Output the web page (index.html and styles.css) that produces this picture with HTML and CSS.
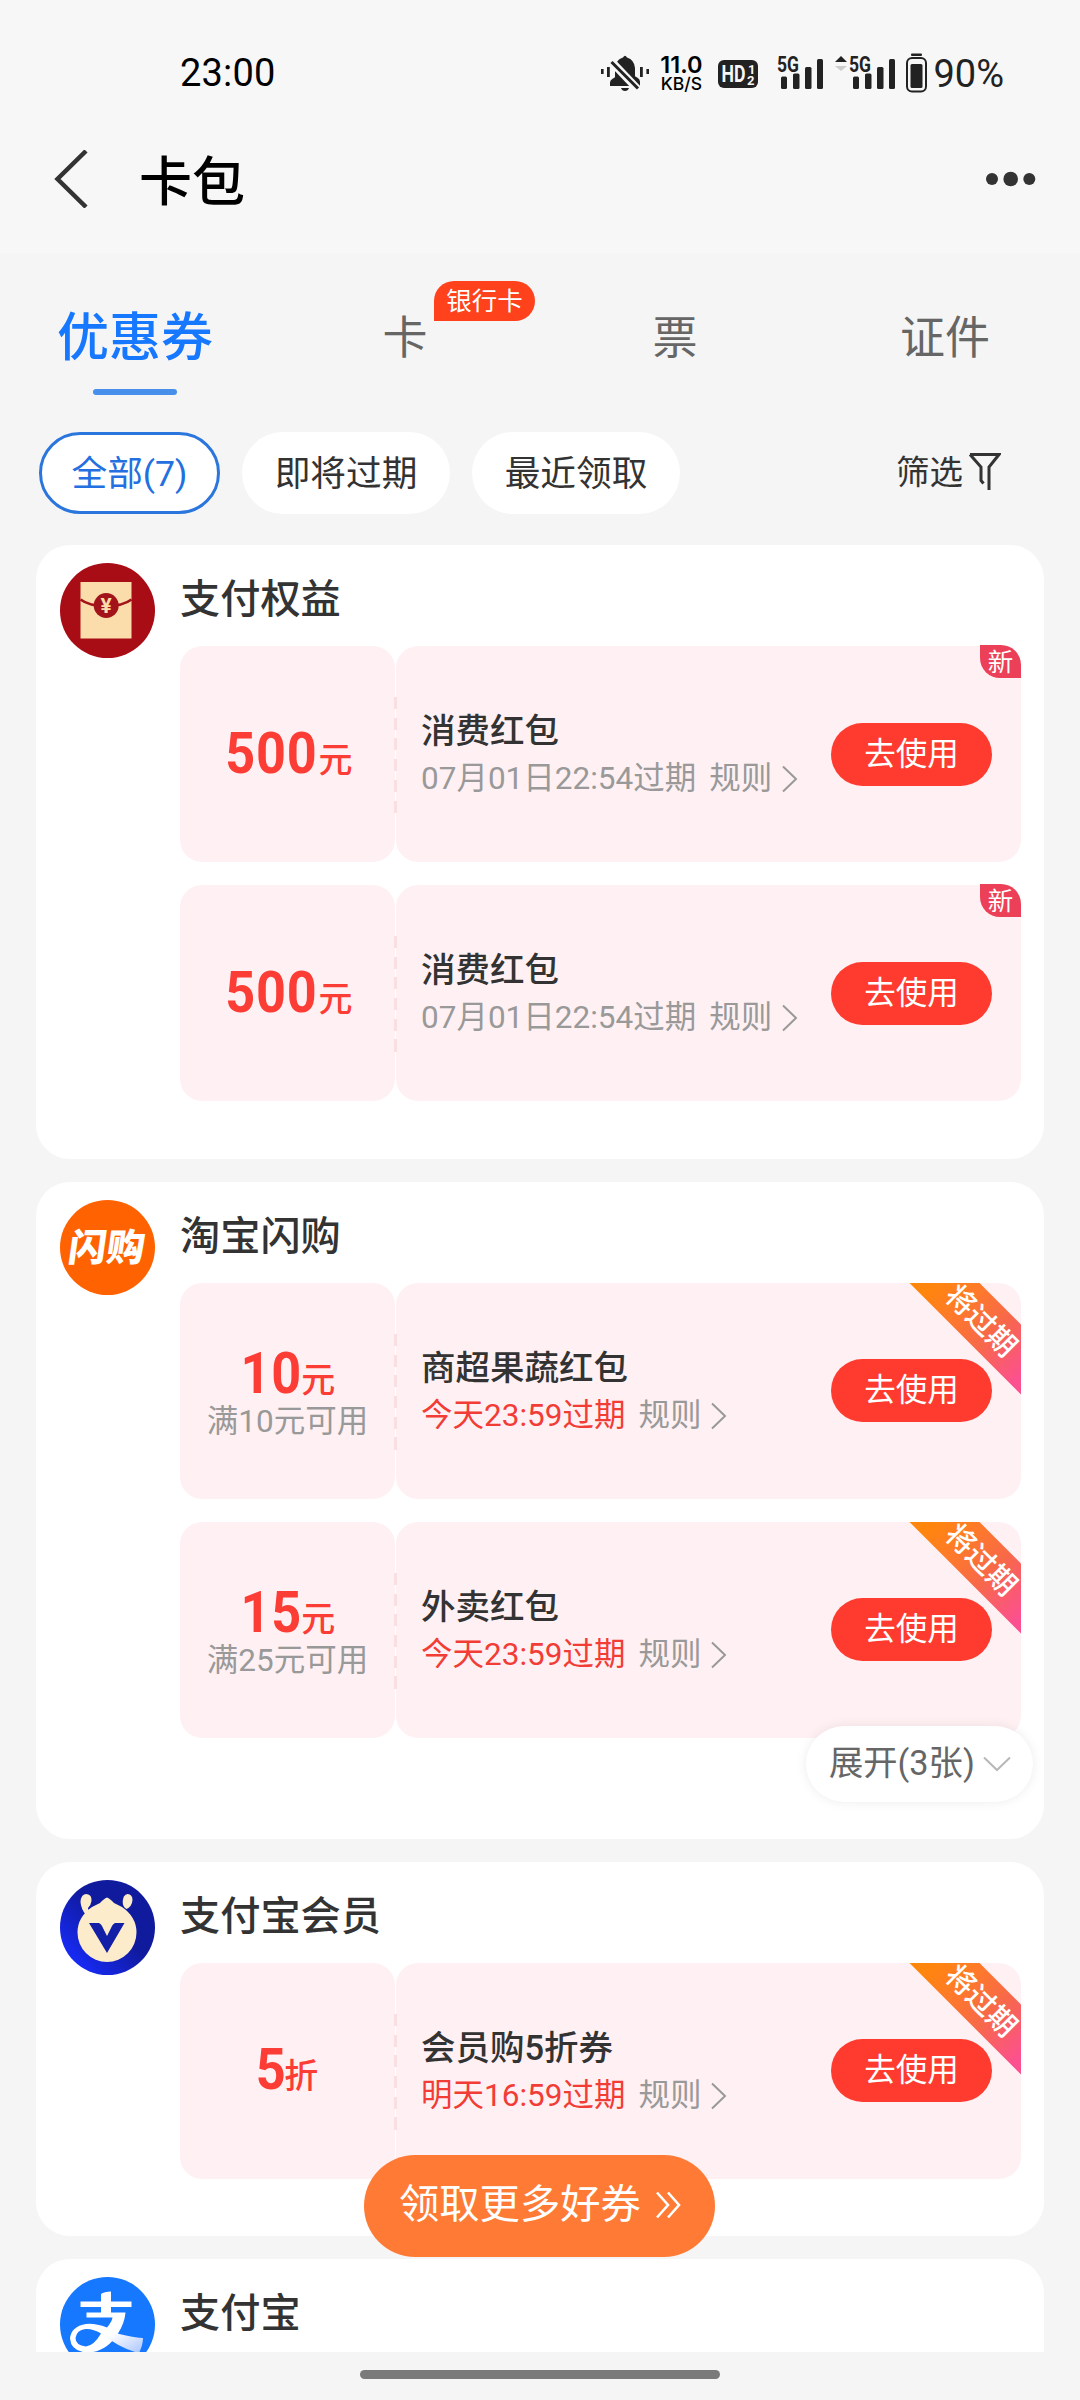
FILE: index.html
```html
<!DOCTYPE html>
<html lang="zh-CN">
<head>
<meta charset="utf-8">
<title>卡包</title>
<link rel="stylesheet" href="styles.css">
</head>
<body>
<svg class="sprite" width="0" height="0">
  <symbol id="arrow" viewBox="0 0 17 28"><path d="M2 1.500 15 14 2 26.500" fill="none" stroke="currentColor" stroke-width="2"/></symbol>
</svg>

<div class="top">
  <div class="status">
    <span class="clock">23:00</span>
    <div class="indicators">
      <svg class="bell" viewBox="0 0 48 36" fill="#222">
        <rect x="0" y="14" width="2.6" height="5"/><rect x="6" y="12" width="2.8" height="10"/>
        <rect x="39" y="12" width="2.8" height="10"/><rect x="45.4" y="14" width="2.6" height="5"/>
        <path d="M9 31v-3.500q0-2.500 3-4l2-1.200V13q.5-8 8-10.500Q24-1 26 2.500q7.500 2.500 8 10.500v8.300l2.500 1.500q2.500 1.500 2.500 4V31Z"/>
        <path d="M20 33h8q-1 3-4 3t-4-3Z"/>
        <path d="M8 4 37 34.500" stroke="#f7f7f7" stroke-width="8"/>
        <path d="M10.500 7 37 33.500" stroke="#222" stroke-width="3"/>
      </svg>
      <div class="speed"><b>11.0</b><span>KB/S</span></div>
      <svg class="hd" viewBox="0 0 40 28">
        <rect width="40" height="28" rx="6" fill="#222"/>
        <g fill="#f7f7f7"><text x="3.500" y="22" font-size="23" textLength="24" lengthAdjust="spacingAndGlyphs">HD</text><text x="30" y="13.500" font-size="13">1</text><text x="29" y="25" font-size="13">2</text></g>
      </svg>
      <svg class="signal" viewBox="0 0 46 34" fill="#222">
        <text x="0" y="16.500" textLength="22" lengthAdjust="spacingAndGlyphs">5G</text>
        <rect x="4" y="21.500" width="6" height="12.500" rx="1.500"/><rect x="16" y="18.500" width="6.500" height="15.500" rx="1.500"/><rect x="28" y="12" width="6.500" height="22" rx="1.500"/><rect x="40" y="4" width="6" height="30" rx="1.500"/>
      </svg>
      <svg class="updown" viewBox="0 0 12 34"><path d="M6 1 12 7H0Z" fill="#222"/><path d="M0 11h12l-6 5Z" fill="#ccc"/></svg>
      <svg class="signal second" viewBox="0 0 46 34" fill="#222">
        <text x="0" y="16.500" textLength="22" lengthAdjust="spacingAndGlyphs">5G</text>
        <rect x="4" y="21.500" width="6" height="12.500" rx="1.500"/><rect x="16" y="18.500" width="6.500" height="15.500" rx="1.500"/><rect x="28" y="12" width="6.500" height="22" rx="1.500"/><rect x="40" y="4" width="6" height="30" rx="1.500"/>
      </svg>
      <svg class="battery" viewBox="0 0 21 40"><rect x="5" y="0.500" width="11" height="2.500" rx="1" fill="#222"/><rect x="1" y="5" width="19" height="33.500" rx="5" fill="none" stroke="#222" stroke-width="2"/><rect x="4.500" y="11" width="12" height="24" rx="1.500" fill="#222"/></svg>
      <span class="percent">90%</span>
    </div>
  </div>
  <div class="nav">
    <svg class="back" viewBox="0 0 35 58"><path d="M32 1 3.500 29 32 57" fill="none" stroke="#333" stroke-width="4.500"/></svg>
    <h1>卡包</h1>
    <svg class="more" viewBox="0 0 50 16" fill="#333"><circle cx="6" cy="8" r="6"/><circle cx="24.700" cy="8" r="7.300"/><circle cx="43.300" cy="8" r="6"/></svg>
  </div>
</div>

<div class="tabs">
  <div class="tab active">优惠券</div>
  <div class="tab">卡<span class="tip">银行卡</span></div>
  <div class="tab">票</div>
  <div class="tab">证件</div>
</div>

<div class="filters">
  <span class="chip on">全部(7)</span>
  <span class="chip">即将过期</span>
  <span class="chip">最近领取</span>
  <span class="filter"><span>筛选</span><svg viewBox="0 0 32 38"><path d="M1.500 1.500h29L20.500 14v23M1.500 1.500 12.500 14v13.500l2.500 3" fill="none" stroke="#333" stroke-width="3"/></svg></span>
</div>

<div class="list">
  <section class="card">
    <svg class="logo" viewBox="0 0 95 95">
      <circle cx="47.500" cy="47.500" r="47.500" fill="#a80c14"/>
      <rect x="20.500" y="19" width="51" height="56.500" fill="#fbdcab"/>
      <path d="M20.500 36.500Q29 43 46 43T71.500 36.500" fill="none" stroke="#a3131a" stroke-width="2.600"/>
      <circle cx="46.200" cy="42.500" r="12.500" fill="#a3131a"/>
      <text x="46.200" y="50" class="yen">¥</text>
    </svg>
    <div class="body">
      <h2>支付权益</h2>
      <div class="coupons">
        <article class="coupon">
          <div class="value"><p><b>500</b>元</p></div>
          <div class="info"><div class="desc"><h3>消费红包</h3><p><span>07月01日22:54过期</span><span class="rule">规则<svg><use href="#arrow"/></svg></span></p></div><a class="use">去使用</a><span class="new">新</span></div>
        </article>
        <article class="coupon">
          <div class="value"><p><b>500</b>元</p></div>
          <div class="info"><div class="desc"><h3>消费红包</h3><p><span>07月01日22:54过期</span><span class="rule">规则<svg><use href="#arrow"/></svg></span></p></div><a class="use">去使用</a><span class="new">新</span></div>
        </article>
      </div>
    </div>
  </section>

  <section class="card tall">
    <div class="logo flash"><span>闪购</span></div>
    <div class="body">
      <h2>淘宝闪购</h2>
      <div class="coupons">
        <article class="coupon">
          <div class="value"><p><b>10</b>元</p><small>满10元可用</small></div>
          <div class="info"><div class="desc"><h3>商超果蔬红包</h3><p><span class="soon">今天23:59过期</span><span class="rule">规则<svg><use href="#arrow"/></svg></span></p></div><a class="use">去使用</a><span class="ribbon"><i>将过期</i></span></div>
        </article>
        <article class="coupon">
          <div class="value"><p><b>15</b>元</p><small>满25元可用</small></div>
          <div class="info"><div class="desc"><h3>外卖红包</h3><p><span class="soon">今天23:59过期</span><span class="rule">规则<svg><use href="#arrow"/></svg></span></p></div><a class="use">去使用</a><span class="ribbon"><i>将过期</i></span></div>
        </article>
      </div>
    </div>
    <div class="expand"><span>展开(3张)</span><svg viewBox="0 0 28 16"><path d="M1 1.500 14 14 27 1.500" fill="none" stroke="#b8b8b8" stroke-width="2"/></svg></div>
  </section>

  <section class="card">
    <svg class="logo" viewBox="0 0 95 95">
      <defs><linearGradient id="navy" x1="0" y1="1" x2="1" y2="0"><stop offset=".1" stop-color="#182cff"/><stop offset=".55" stop-color="#101a9c"/></linearGradient></defs>
      <circle cx="47.500" cy="47.500" r="47.500" fill="url(#navy)"/>
      <g fill="#fdeccb">
        <path d="M47 17.500q3 1 7 5.500 4 2 8 4 14.500 10 14.500 25.500A29.500 29.500 0 0 1 17.500 52.500Q17.500 37 32 27q4-2 8-4 4-4.500 7-5.500Z"/>
        <path d="M26 35q-5-6-5.500-13 .5-8 6-8 5.500.5 5 7-.5 4-3.500 7 0 3 3 3Z"/>
        <path d="M67.500 14q5 .5 5 6-.5 6.500-6 9-4-2-3.800-8 .5-6 4.800-7Z"/>
      </g>
      <path d="M29 43h10q2 1 3 3l5 10 5-10q1-2 3-3h9.500L47 73Z" fill="#121fa6"/>
    </svg>
    <div class="body">
      <h2>支付宝会员</h2>
      <div class="coupons">
        <article class="coupon">
          <div class="value"><p><b>5</b>折</p></div>
          <div class="info"><div class="desc"><h3>会员购5折券</h3><p><span class="soon">明天16:59过期</span><span class="rule">规则<svg><use href="#arrow"/></svg></span></p></div><a class="use">去使用</a><span class="ribbon"><i>将过期</i></span></div>
        </article>
      </div>
    </div>
  </section>

  <section class="card">
    <svg class="logo" viewBox="0 0 95 95">
      <defs><linearGradient id="ice" x1="0" y1="0" x2="1" y2="1"><stop offset=".3" stop-color="#fff"/><stop offset="1" stop-color="#a8c4ff"/></linearGradient></defs>
      <circle cx="47.500" cy="47.500" r="47.500" fill="#1677ff"/>
      <path fill="#fff" fill-rule="evenodd" d="M20.500 24.500H41V17q3-2.500 10-2.500v10h20.500V30H51v5.500h14.500q-1 11-7.500 21-12 19-31 19-16-1-17-14 1-12 16-14.500 9-1 21 3.500 5-6 5.500-10H26.500v-5H41V30H20.500ZM41 56.500q-8-5-15.500-4.500-9 1-10 9 0 7.500 10.500 8.500 8-1 15-13Z"/>
      <path fill="url(#ice)" d="M40 49q12 7 26 9.500 10 2 17 2.500 0 7-4 15-18-4-37-19Z"/>
    </svg>
    <div class="body"><h2>支付宝</h2></div>
  </section>
</div>

<div class="home"><span></span></div>
<div class="more-coupons"><span>领取更多好券</span><svg viewBox="0 0 27 28"><path d="M2 1.500 13 14 2 26.500M13 1.500 24 14 13 26.500" fill="none" stroke="#fff" stroke-width="2.600"/></svg></div>
</body>
</html>
```

FILE: styles.css
```css
* { box-sizing: border-box; }
h1, h2, h3, p { margin: 0; font-weight: 500; }
i { font-style: normal; }
svg { display: block; flex: none; }
.sprite { position: absolute; }

body {
  position: relative;
  display: flex;
  flex-direction: column;
  width: 1080px;
  height: 2400px;
  margin: 0;
  overflow: hidden;
  background: #f5f5f5;
  color: #333;
  font-family: Roboto, "Noto Sans CJK SC", sans-serif;
}

.top { flex: none; height: 253px; background: #f7f7f7; }

/* status bar */
.status {
  display: flex;
  justify-content: space-between;
  align-items: center;
  height: 146px;
  padding: 0 76px 0 180px;
}
.clock { font-size: 38px; line-height: 44px; color: #000; letter-spacing: .2px; }
.indicators { display: flex; align-items: center; height: 44px; color: #222; }
.bell { width: 48px; height: 36px; margin-top: -1px; }
.speed {
  display: flex;
  flex-direction: column;
  align-items: center;
  width: 44px;
  margin-left: 10px;
  margin-right: 1px;
  color: #000;
  font-family: Inter, sans-serif;
}
.speed b { font-size: 23.500px; line-height: 21px; font-weight: 600; }
.speed span { font-size: 17.500px; line-height: 17px; font-weight: 500; }
.hd { width: 40px; height: 28px; margin-left: 14px; margin-top: 1px; font: 700 23px Roboto, sans-serif; }
.signal { width: 46px; height: 34px; margin-left: 19px; margin-top: -2px; overflow: visible; }
.signal text { font: 700 22px Roboto, sans-serif; }
.updown { width: 12px; height: 34px; margin: -2px 2px 0 12px; }
.signal.second { margin-left: 0; }
.battery { width: 21px; height: 40px; margin-left: 11px; }
.percent { margin-left: 6px; font-size: 38px; line-height: 44px; padding-top: 2px; }

/* title bar */
.nav { display: flex; align-items: center; height: 66px; padding: 0 44px 0 54px; }
.back { width: 35px; height: 58px; }
.nav h1 { flex: 1; margin-left: 50px; padding-top: 8px; font-size: 53px; line-height: 62px; color: #000; }
.more { width: 50px; height: 16px; }

/* tabs */
.tabs { display: flex; flex: none; height: 179px; padding-top: 51px; }
.tab {
  position: relative;
  flex: 1;
  height: 70px;
  text-align: center;
  font-size: 45px;
  line-height: 70px;
  color: #666;
}
.tab.active { font-size: 52px; font-weight: 500; line-height: 69px; color: #1677ff; }
.tab.active::after {
  content: "";
  position: absolute;
  left: 93px;
  top: 85px;
  width: 84px;
  height: 6px;
  border-radius: 3px;
  background: #478fea;
}
.tip {
  position: absolute;
  left: 164px;
  top: -23px;
  width: 101px;
  height: 40px;
  border-radius: 20px 20px 20px 0;
  background: #ff411c;
  color: #fff;
  font-size: 25.500px;
  line-height: 41px;
}

/* filter row */
.filters { display: flex; flex: none; align-items: center; height: 82px; padding: 0 79px 0 39px; gap: 22px; }
.chip {
  width: 208px;
  height: 82px;
  border-radius: 41px;
  background: #fff;
  text-align: center;
  font-size: 35.700px;
  line-height: 84px;
}
.chip.on { width: 181px; border: 3px solid #2b76dd; color: #2470e0; line-height: 78px; }
.filter { display: flex; align-items: center; gap: 5px; margin-left: auto; font-size: 33.500px; line-height: 40px; }
.filter span { margin-top: 0; }
.filter svg { width: 33px; height: 38px; margin-top: -2px; }

/* coupon groups */
.list {
  display: flex;
  flex-direction: column;
  flex: none;
  gap: 23px;
  height: 1807px;
  margin-top: 31px;
  padding: 0 36px;
  overflow: hidden;
}
.card {
  position: relative;
  display: flex;
  flex: none;
  gap: 25px;
  padding: 18px 23px 57.500px 24px;
  border-radius: 34px;
  background: #fff;
}
.card.tall { padding-bottom: 101px; }
.logo { flex: none; width: 95px; height: 95px; }
.yen { font: 700 21px Roboto, sans-serif; fill: #fbdcab; text-anchor: middle; }
.flash {
  display: flex;
  align-items: center;
  justify-content: center;
  border-radius: 50%;
  background: #ff6200;
  color: #fff;
  font-size: 38px;
  font-weight: 900;
  line-height: 44px;
}
.flash span { transform: skewX(-8deg); padding-top: 2px; }
.body { flex: 1; }
.body h2 { height: 83px; padding-top: 15px; font-size: 40.200px; line-height: 44px; }
.coupons { display: flex; flex-direction: column; gap: 23px; }
.coupon { position: relative; display: flex; height: 216px; gap: 1px; }
.coupon::after {
  content: "";
  position: absolute;
  left: 214px;
  top: 51px;
  width: 3px;
  height: 116px;
  background: repeating-linear-gradient(#fadfe2 0 12px, transparent 12px 20.700px);
}
.value {
  display: flex;
  flex-direction: column;
  align-items: center;
  justify-content: center;
  width: 215px;
  padding-top: 3px;
  border-radius: 22px;
  background: #fff1f3;
  color: #fc3d36;
}
.value p { font-size: 34px; line-height: 56px; }
.value b {
  display: inline-block;
  margin: 0 -4px 0 -3px;
  font-size: 58px;
  letter-spacing: 1px;
  transform: translateY(1px) scaleX(.9);
}
.value small { margin-top: -5px; font-size: 31.500px; line-height: 38px; color: #999; }
.info {
  position: relative;
  display: flex;
  flex: 1;
  align-items: center;
  justify-content: space-between;
  padding: 0 29px 0 25px;
  border-radius: 22px;
  background: #fff1f3;
}
.desc { padding-top: 2px; }
.desc h3 { font-size: 34.500px; line-height: 48px; color: #333; }
.desc p { display: flex; align-items: center; gap: 13px; font-size: 31.500px; line-height: 48px; font-weight: 400; color: #999; white-space: nowrap; }
.desc .soon { color: #f23c36; }
.rule { display: flex; align-items: center; gap: 9px; }
.rule svg { width: 17px; height: 28px; }
.use {
  width: 161px;
  height: 63px;
  border-radius: 32px;
  background: #ff3b30;
  color: #fff;
  text-align: center;
  font-size: 31.500px;
  line-height: 64px;
}
.new {
  position: absolute;
  right: 0;
  top: -1px;
  width: 41px;
  height: 33px;
  border-radius: 0 20px 0 20px;
  background: #ec4058;
  color: #fff;
  text-align: center;
  font-size: 25.500px;
  line-height: 34px;
}
.ribbon {
  position: absolute;
  right: 0;
  top: 0;
  width: 112px;
  height: 112px;
  clip-path: polygon(0 0, 70px 0, 112px 42px, 112px 112px);
  background: linear-gradient(135deg, #ff860c 10%, #ff7b28 32%, #f7684a 60%, #fc5090 92%);
}
.ribbon i {
  position: absolute;
  left: 12px;
  top: 18px;
  width: 120px;
  text-align: center;
  color: #fff;
  font-size: 29px;
  font-weight: 500;
  line-height: 40px;
  transform: rotate(45deg);
}
.expand {
  position: absolute;
  right: 11px;
  bottom: 37px;
  display: flex;
  align-items: center;
  gap: 8px;
  width: 227px;
  height: 76px;
  padding-left: 23px;
  border-radius: 38px;
  background: #fff;
  box-shadow: 0 0 12px rgba(0, 0, 0, .08);
  color: #666;
  font-size: 34.300px;
  line-height: 40px;
  white-space: nowrap;
}
.expand span { margin-top: -1px; }
.expand svg { width: 28px; height: 16px; }

/* bottom */
.home { display: flex; justify-content: center; height: 48px; padding-top: 18px; }
.home span { width: 360px; height: 9px; border-radius: 5px; background: #7a7a7a; }
.more-coupons {
  position: absolute;
  left: 364px;
  top: 2155px;
  display: flex;
  align-items: center;
  gap: 14px;
  width: 351px;
  height: 102px;
  padding-left: 35px;
  border-radius: 51px;
  background: #ff7a34;
  color: #fff;
  font-size: 40.300px;
  line-height: 48px;
  white-space: nowrap;
}
.more-coupons span { margin-top: -2px; }
.more-coupons svg { width: 27px; height: 28px; margin-top: -2px; }
```
